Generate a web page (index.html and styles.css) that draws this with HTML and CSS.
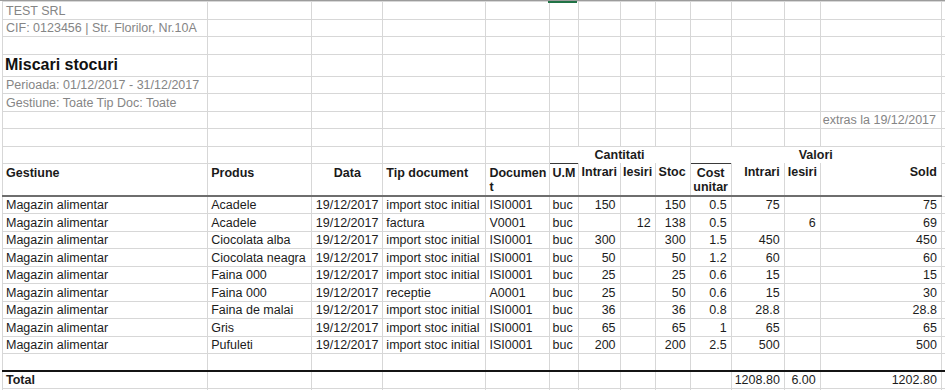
FILE: index.html
```html
<!DOCTYPE html>
<html lang="ro">
<head>
<meta charset="utf-8">
<title>Miscari stocuri</title>
<link rel="stylesheet" href="styles.css">
</head>
<body>
<div class="sheet">
  <div class="active-col"></div>
  <table class="grid">
    <colgroup>
      <col class="c-a"><col class="c-b"><col class="c-c"><col class="c-d"><col class="c-e"><col class="c-f"><col class="c-g"><col class="c-h"><col class="c-i"><col class="c-j"><col class="c-k"><col class="c-l"><col class="c-m"><col class="c-n">
    </colgroup>
    <tbody>
      <tr class="r"><td class="muted">TEST SRL</td><td></td><td></td><td></td><td></td><td></td><td></td><td></td><td></td><td></td><td></td><td></td><td></td><td></td></tr>
      <tr class="r"><td class="muted">CIF: 0123456 | Str. Florilor, Nr.10A</td><td></td><td></td><td></td><td></td><td></td><td></td><td></td><td></td><td></td><td></td><td></td><td></td><td></td></tr>
      <tr class="r"><td></td><td></td><td></td><td></td><td></td><td></td><td></td><td></td><td></td><td></td><td></td><td></td><td></td><td></td></tr>
      <tr class="r-title"><td class="title">Miscari stocuri</td><td></td><td></td><td></td><td></td><td></td><td></td><td></td><td></td><td></td><td></td><td></td><td></td><td></td></tr>
      <tr class="r"><td class="muted">Perioada: 01/12/2017 - 31/12/2017</td><td></td><td></td><td></td><td></td><td></td><td></td><td></td><td></td><td></td><td></td><td></td><td></td><td></td></tr>
      <tr class="r"><td class="muted">Gestiune: Toate Tip Doc: Toate</td><td></td><td></td><td></td><td></td><td></td><td></td><td></td><td></td><td></td><td></td><td></td><td></td><td></td></tr>
      <tr class="r"><td></td><td></td><td></td><td></td><td></td><td></td><td></td><td></td><td></td><td></td><td></td><td></td><td class="muted extras">extras la 19/12/2017</td><td></td></tr>
      <tr class="r"><td></td><td></td><td></td><td></td><td></td><td></td><td></td><td></td><td></td><td></td><td></td><td></td><td></td><td></td></tr>
      <tr class="r-group"><td></td><td></td><td></td><td></td><td></td><td class="group" colspan="4">Cantitati</td><td class="group" colspan="4">Valori</td><td></td></tr>
      <tr class="r-head">
        <th class="left">Gestiune</th>
        <th class="left">Produs</th>
        <th class="center">Data</th>
        <th class="left">Tip document</th>
        <th class="left">Documen<br>t</th>
        <th class="left top-dark">U.M</th>
        <th class="right no-top">Intrari</th>
        <th class="center no-top">Iesiri</th>
        <th class="right no-top">Stoc</th>
        <th class="center top-dark">Cost<br>unitar</th>
        <th class="right no-top">Intrari</th>
        <th class="left no-top">Iesiri</th>
        <th class="right no-top">Sold</th>
        <td></td>
      </tr>
      <tr class="r"><td>Magazin alimentar</td><td>Acadele</td><td class="num">19/12/2017</td><td>import stoc initial</td><td>ISI0001</td><td>buc</td><td class="num">150</td><td class="num"></td><td class="num">150</td><td class="num">0.5</td><td class="num">75</td><td class="num"></td><td class="num">75</td><td></td></tr>
      <tr class="r"><td>Magazin alimentar</td><td>Acadele</td><td class="num">19/12/2017</td><td>factura</td><td>V0001</td><td>buc</td><td class="num"></td><td class="num">12</td><td class="num">138</td><td class="num">0.5</td><td class="num"></td><td class="num">6</td><td class="num">69</td><td></td></tr>
      <tr class="r"><td>Magazin alimentar</td><td>Ciocolata alba</td><td class="num">19/12/2017</td><td>import stoc initial</td><td>ISI0001</td><td>buc</td><td class="num">300</td><td class="num"></td><td class="num">300</td><td class="num">1.5</td><td class="num">450</td><td class="num"></td><td class="num">450</td><td></td></tr>
      <tr class="r"><td>Magazin alimentar</td><td>Ciocolata neagra</td><td class="num">19/12/2017</td><td>import stoc initial</td><td>ISI0001</td><td>buc</td><td class="num">50</td><td class="num"></td><td class="num">50</td><td class="num">1.2</td><td class="num">60</td><td class="num"></td><td class="num">60</td><td></td></tr>
      <tr class="r"><td>Magazin alimentar</td><td>Faina 000</td><td class="num">19/12/2017</td><td>import stoc initial</td><td>ISI0001</td><td>buc</td><td class="num">25</td><td class="num"></td><td class="num">25</td><td class="num">0.6</td><td class="num">15</td><td class="num"></td><td class="num">15</td><td></td></tr>
      <tr class="r"><td>Magazin alimentar</td><td>Faina 000</td><td class="num">19/12/2017</td><td>receptie</td><td>A0001</td><td>buc</td><td class="num">25</td><td class="num"></td><td class="num">50</td><td class="num">0.6</td><td class="num">15</td><td class="num"></td><td class="num">30</td><td></td></tr>
      <tr class="r"><td>Magazin alimentar</td><td>Faina de malai</td><td class="num">19/12/2017</td><td>import stoc initial</td><td>ISI0001</td><td>buc</td><td class="num">36</td><td class="num"></td><td class="num">36</td><td class="num">0.8</td><td class="num">28.8</td><td class="num"></td><td class="num">28.8</td><td></td></tr>
      <tr class="r"><td>Magazin alimentar</td><td>Gris</td><td class="num">19/12/2017</td><td>import stoc initial</td><td>ISI0001</td><td>buc</td><td class="num">65</td><td class="num"></td><td class="num">65</td><td class="num">1</td><td class="num">65</td><td class="num"></td><td class="num">65</td><td></td></tr>
      <tr class="r"><td>Magazin alimentar</td><td>Pufuleti</td><td class="num">19/12/2017</td><td>import stoc initial</td><td>ISI0001</td><td>buc</td><td class="num">200</td><td class="num"></td><td class="num">200</td><td class="num">2.5</td><td class="num">500</td><td class="num"></td><td class="num">500</td><td></td></tr>
      <tr class="r-blank"><td></td><td></td><td></td><td></td><td></td><td></td><td></td><td></td><td></td><td></td><td></td><td></td><td></td><td></td></tr>
      <tr class="r-total"><td class="bold">Total</td><td></td><td></td><td></td><td></td><td></td><td></td><td></td><td></td><td></td><td class="num">1208.80</td><td class="num">6.00</td><td class="num">1202.80</td><td></td></tr>
      <tr class="r"><td></td><td></td><td></td><td></td><td></td><td></td><td></td><td></td><td></td><td></td><td></td><td></td><td></td><td></td></tr>
    </tbody>
  </table>
</div>
</body>
</html>
```

FILE: styles.css
```css
html, body {
  margin: 0;
  padding: 0;
  background: #ffffff;
}

.sheet {
  position: relative;
  width: 945px;
  height: 390px;
  overflow: hidden;
  border-top: 1px solid #9c9c9c;
  box-sizing: border-box;
  padding-left: 2px;
  font-family: "Liberation Sans", Arial, sans-serif;
  font-size: 12.5px;
  color: #1c1c1c;
}

.active-col {
  position: absolute;
  top: -1px;
  left: 548px;
  width: 29px;
  height: 3px;
  background: #217346;
}

.grid {
  border-collapse: collapse;
  table-layout: fixed;
  width: 968px;
}

.c-a { width: 205px; }
.c-b { width: 104px; }
.c-c { width: 71px; }
.c-d { width: 103px; }
.c-e { width: 63px; }
.c-f { width: 29px; }
.c-g { width: 42px; }
.c-h { width: 35px; }
.c-i { width: 35px; }
.c-j { width: 41px; }
.c-k { width: 53px; }
.c-l { width: 36px; }
.c-m { width: 121px; }
.c-n { width: 28px; }

.grid td,
.grid th {
  border: 1px solid #d7d7d7;
  padding: 0 4px 1px 3px;
  line-height: 14px;
  vertical-align: bottom;
  white-space: nowrap;
  overflow: hidden;
  text-align: left;
  font-weight: normal;
}

.r { height: 17.5px; }
.r-title { height: 22px; }
.r-group { height: 17px; }
.r-head { height: 33px; }
.r-blank { height: 17px; }
.r-total { height: 18px; }

.muted {
  color: #858585;
}

.grid td.extras {
  padding-left: 2px;
}

.grid td.title {
  font-size: 16px;
  font-weight: bold;
  color: #111111;
  line-height: 18px;
  padding-bottom: 2px;
  padding-left: 2px;
}

.grid td.group {
  font-weight: bold;
  text-align: center;
  vertical-align: middle;
  border-bottom: none;
  padding: 0;
}

.grid th {
  font-weight: bold;
  vertical-align: top;
  padding-top: 2px;
  border-bottom: 2px solid #6e6e6e;
  color: #1a1a1a;
}

.grid th.left { text-align: left; }
.grid th.right { text-align: right; }
.grid th.center { text-align: center; padding-left: 1px; padding-right: 1px; }

.grid th.top-dark { border-top: 1px solid #3a3a3a; }
.grid th.no-top { border-top: none; }

.grid td.num {
  text-align: right;
  padding-right: 4px;
}

.grid td.bold {
  font-weight: bold;
}

.r-total td {
  border-top: 2px solid #141414;
}
```
